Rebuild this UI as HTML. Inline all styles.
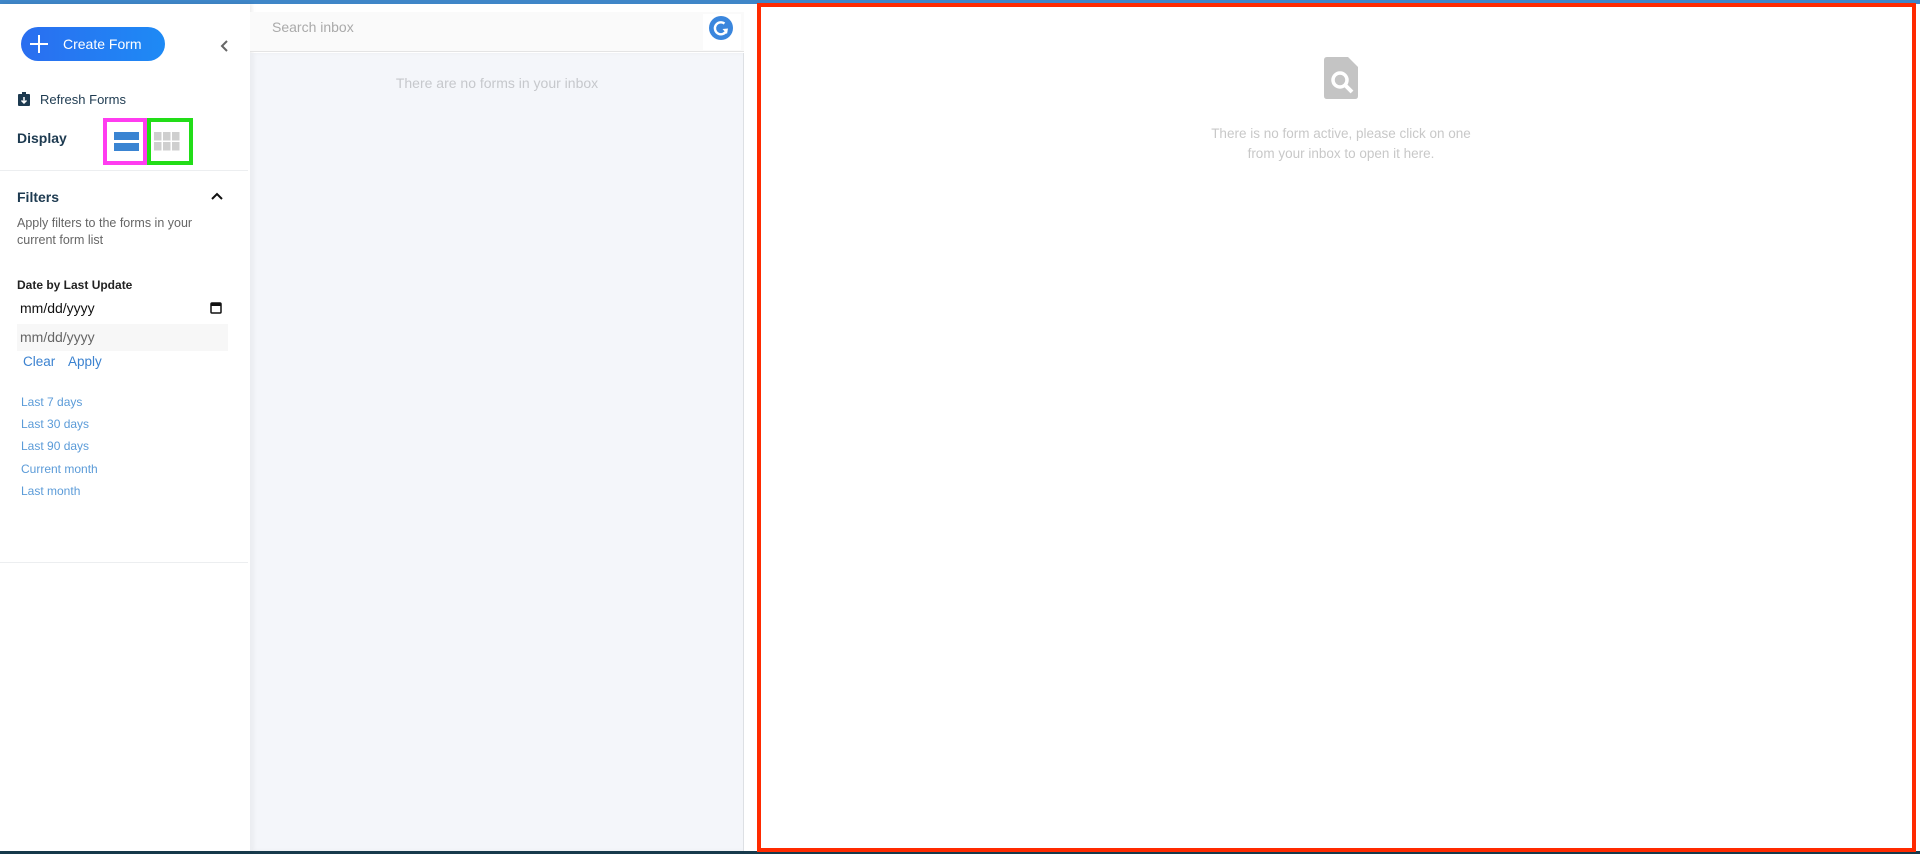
<!DOCTYPE html>
<html><head><meta charset="utf-8"><style>
*{box-sizing:border-box;margin:0;padding:0}
body{width:1920px;height:854px;position:relative;overflow:hidden;background:#fff;font-family:"Liberation Sans",Arial,sans-serif}
.a{position:absolute}
</style></head><body>
<div class="a" style="left:0;top:0;width:1920px;height:4px;background:#3f86c8"></div>
<div class="a" style="left:0;top:851px;width:1920px;height:3px;background:#173a4c"></div>
<!-- sidebar -->
<div class="a" style="left:0;top:4px;width:250px;height:847px;background:#fff;box-shadow:2px 0 4px rgba(0,0,0,0.08)"></div>
<div class="a" style="left:21px;top:27px;width:144px;height:34px;border-radius:17px;background:linear-gradient(90deg,#2a6ef0,#1e8af5);color:#fff;font-size:14px;line-height:34px;padding-left:42px">Create Form</div>
<div class="a" style="left:38px;top:35px;width:2px;height:18px;background:#fff"></div>
<div class="a" style="left:30px;top:43px;width:18px;height:2px;background:#fff"></div>
<svg class="a" style="left:219px;top:39px" width="12" height="14"><path d="M8 2 L3 7 L8 12" stroke="#666" stroke-width="2" fill="none"/></svg>
<svg class="a" style="left:18px;top:92px" width="12" height="14"><rect x="0" y="2" width="12" height="12" rx="1" fill="#1d3a50"/><rect x="4" y="0" width="4" height="3" fill="#1d3a50"/><path d="M6 5 V11 M3.5 8.5 L6 11 L8.5 8.5" stroke="#fff" stroke-width="1.5" fill="none"/></svg>
<div class="a" style="left:40px;top:92px;font-size:13px;color:#1d3a50">Refresh Forms</div>
<div class="a" style="left:17px;top:130px;font-size:14px;font-weight:bold;color:#1d3a50">Display</div>
<div class="a" style="left:103px;top:118px;width:44px;height:47px;border:4px solid #ff3cf0"></div>
<div class="a" style="left:114px;top:132px;width:25px;height:8px;background:#3a84d2"></div>
<div class="a" style="left:114px;top:143px;width:25px;height:8px;background:#3a84d2"></div>
<div class="a" style="left:147px;top:118px;width:46px;height:47px;border:4px solid #22dd18"></div>
<svg class="a" style="left:154px;top:132px" width="26" height="20" fill="#cfcfcf"><rect x="0" y="0" width="7.5" height="8.5"/><rect x="9" y="0" width="7.5" height="8.5"/><rect x="18" y="0" width="7.5" height="8.5"/><rect x="0" y="10" width="7.5" height="8.5"/><rect x="9" y="10" width="7.5" height="8.5"/><rect x="18" y="10" width="7.5" height="8.5"/></svg>
<div class="a" style="left:0;top:170px;width:248px;height:1px;background:#eceef0"></div>
<div class="a" style="left:17px;top:189px;font-size:14px;font-weight:bold;color:#1d3a50">Filters</div>
<svg class="a" style="left:210px;top:191px" width="14" height="10"><path d="M2 8 L7 3 L12 8" stroke="#111" stroke-width="2" fill="none"/></svg>
<div class="a" style="left:17px;top:215px;font-size:12.5px;line-height:17px;color:#666;width:200px">Apply filters to the forms in your current form list</div>
<div class="a" style="left:17px;top:278px;font-size:12px;font-weight:bold;color:#222">Date by Last Update</div>
<div class="a" style="left:20px;top:300px;font-size:14px;color:#111">mm/dd/yyyy</div>
<svg class="a" style="left:210px;top:301px" width="12" height="13"><rect x="1" y="2" width="10" height="10" rx="1" stroke="#111" stroke-width="1.5" fill="none"/><rect x="1" y="2" width="10" height="3" fill="#111"/></svg>
<div class="a" style="left:17px;top:324px;width:211px;height:27px;background:#f7f7f7"></div>
<div class="a" style="left:20px;top:329px;font-size:14px;color:#666">mm/dd/yyyy</div>
<div class="a" style="left:23px;top:354px;font-size:13.5px;color:#3b82d0">Clear</div>
<div class="a" style="left:68px;top:354px;font-size:13.5px;color:#3b82d0">Apply</div>
<div class="a" style="left:21px;top:391px;font-size:12px;line-height:22.2px;color:#5b9bd8">Last 7 days<br>Last 30 days<br>Last 90 days<br>Current month<br>Last month</div>
<div class="a" style="left:0;top:562px;width:248px;height:1px;background:#eceef0"></div>
<!-- middle -->
<div class="a" style="left:250px;top:12px;width:494px;height:40px;background:#fafafa;border-bottom:1px solid #e4e4e4"></div>
<div class="a" style="left:272px;top:19px;font-size:14px;color:#aaa">Search inbox</div>
<div class="a" style="left:703px;top:14px;width:38px;height:36px;background:#fff"></div>
<div class="a" style="left:709px;top:16px;width:24px;height:24px;border-radius:50%;background:#3a86dd"></div>
<svg class="a" style="left:709px;top:16px" width="24" height="24"><path d="M15.5 7.5 A6 6 0 1 0 17.5 14.5" stroke="#fff" stroke-width="2.4" fill="none"/><path d="M13.5 13 L19 12.5 L18 18 Z" fill="#fff"/></svg>
<div class="a" style="left:250px;top:53px;width:494px;height:798px;background:#f4f6fa;border-right:1px solid #dde0e4;box-shadow:inset 4px 0 4px rgba(0,0,0,0.04)"></div>
<div class="a" style="left:250px;top:75px;width:494px;text-align:center;font-size:14px;color:#c6c8cc">There are no forms in your inbox</div>
<!-- right -->
<div class="a" style="left:757px;top:3px;width:1159px;height:849px;border:4px solid #ff2a00"></div>
<svg class="a" style="left:1324px;top:57px" width="34" height="42"><path d="M3 0 H24 L34 10 V39 Q34 42 31 42 H3 Q0 42 0 39 V3 Q0 0 3 0 Z" fill="#c4c4c4"/><circle cx="16" cy="23" r="7" stroke="#fff" stroke-width="3.5" fill="none"/><path d="M21 28 L28 35" stroke="#fff" stroke-width="4"/></svg>
<div class="a" style="left:1141px;top:124px;width:400px;text-align:center;font-size:13.5px;line-height:20px;color:#c8c8c8">There is no form active, please click on one<br>from your inbox to open it here.</div>
</body></html>
